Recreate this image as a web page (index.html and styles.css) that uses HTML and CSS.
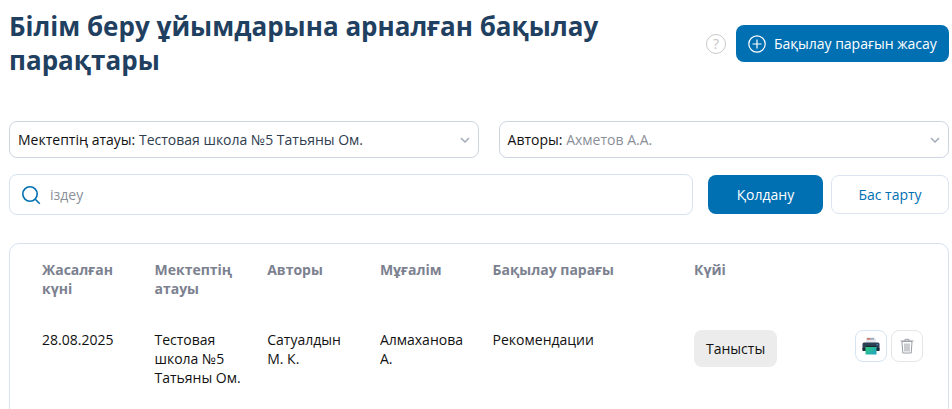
FILE: index.html
```html
<!DOCTYPE html>
<html lang="en">
<head>
  <meta charset="UTF-8">
  <meta name="viewport" content="width=device-width, initial-scale=1.0">
  <title>Бақылау парақтары</title>
  <link rel="stylesheet" href="styles.css">
</head>
<body>
  <div class="page-head">
    <h1>Білім беру ұйымдарына арналған бақылау парақтары</h1>
    <div class="head-actions">
      <span class="help-icon">?</span>
      <button class="btn btn-primary btn-create">
        <svg width="18" height="18" viewBox="0 0 18 18" fill="none" stroke="#fff" stroke-width="1.2">
          <circle cx="9" cy="9" r="8.2"/>
          <path d="M9 4.5v9M4.5 9h9"/>
        </svg>
        Бақылау парағын жасау
      </button>
    </div>
  </div>

  <div class="filters">
    <div class="select">
      <span class="select-label">Мектептің атауы:</span> <span class="select-value">Тестовая школа №5 Татьяны Ом.</span>
      <svg class="chevron" width="10" height="6" viewBox="0 0 10 6" fill="none" stroke="#a3abb8" stroke-width="1.5"><path d="M1 1l4 4 4-4"/></svg>
    </div>
    <div class="select">
      <span class="select-label">Авторы:</span> <span class="select-value muted">Ахметов А.А.</span>
      <svg class="chevron" width="10" height="6" viewBox="0 0 10 6" fill="none" stroke="#a3abb8" stroke-width="1.5"><path d="M1 1l4 4 4-4"/></svg>
    </div>
  </div>

  <div class="search-row">
    <div class="search">
      <svg width="20" height="20" viewBox="0 0 20 20" fill="none" stroke="#0170b3" stroke-width="1.6">
        <circle cx="9" cy="9" r="7.2"/>
        <path d="M14.2 14.2l4.6 4.6"/>
      </svg>
      <span>іздеу</span>
    </div>
    <button class="btn btn-primary btn-apply">Қолдану</button>
    <button class="btn btn-outline">Бас тарту</button>
  </div>

  <div class="card">
    <table>
      <thead>
        <tr>
          <th class="col-date">Жасалған күні</th>
          <th class="col-school">Мектептің атауы</th>
          <th class="col-author">Авторы</th>
          <th class="col-teacher">Мұғалім</th>
          <th class="col-sheet">Бақылау парағы</th>
          <th class="col-status">Күйі</th>
          <th></th>
        </tr>
      </thead>
      <tbody>
        <tr>
          <td>28.08.2025</td>
          <td>Тестовая школа №5 Татьяны Ом.</td>
          <td>Сатуалдын М. К.</td>
          <td>Алмаханова А.</td>
          <td>Рекомендации</td>
          <td><span class="badge">Танысты</span></td>
          <td>
            <div class="row-actions">
              <span class="icon-btn print">
                <svg width="18" height="18" viewBox="0 0 18 18">
                  <defs>
                    <linearGradient id="printSheet" x1="0" y1="0" x2="1" y2="1">
                      <stop offset="0" stop-color="#2fd07a"/>
                      <stop offset="1" stop-color="#1f9fc4"/>
                    </linearGradient>
                  </defs>
                  <path d="M4 .5h8.5l1.5 1.5v4H4z" fill="#e4e8ee"/>
                  <path d="M5 1.2h3.4v1.4H5z" fill="#c9574f"/>
                  <path d="M8.4 1.2h3.6v1.4H8.4z" fill="#8e99a8"/>
                  <rect x=".5" y="5.5" width="17" height="8" rx="1.5" fill="#2d3f52"/>
                  <rect x=".5" y="11" width="17" height="3" fill="#1e2c3a"/>
                  <rect x="3.5" y="9" width="11" height="8.5" fill="url(#printSheet)"/>
                  <rect x="3.5" y="9" width="11" height="1" fill="#16222e"/>
                  <circle cx="15.2" cy="7.5" r=".7" fill="#4aa3df"/>
                </svg>
              </span>
              <span class="icon-btn">
                <svg width="14" height="16" viewBox="0 0 14 16" fill="none">
                  <path d="M.5 3h13M5 3V1.3h4V3" stroke="#9a9fa6"/>
                  <path d="M2 3.5l.8 11.5h8.4L12 3.5z" fill="#fff" stroke="#9a9fa6"/>
                  <rect x="4" y="5.5" width="6" height="8" fill="#c9cbce"/>
                </svg>
              </span>
            </div>
          </td>
        </tr>
      </tbody>
    </table>
  </div>
</body>
</html>
```

FILE: styles.css
```css
* {
  box-sizing: border-box;
}

html {
  overflow: hidden;
}

body {
  margin: 0;
  padding: 9px 3px 0 9px;
  font-family: 'Open Sans', sans-serif;
  font-size: 14px;
  color: #111;
  background: #fff;
}

.page-head {
  display: flex;
  justify-content: space-between;
  align-items: flex-start;
  height: 112px;
}

h1 {
  margin: 0;
  width: 640px;
  font-size: 26px;
  line-height: 34px;
  font-weight: 700;
  color: #1f4060;
}

.head-actions {
  display: flex;
  align-items: center;
  gap: 10px;
  margin-top: 16px;
}

.help-icon {
  width: 20px;
  height: 20px;
  border: 1px solid #c9c9c9;
  border-radius: 50%;
  color: #c4c4c4;
  font-size: 14px;
  line-height: 18px;
  text-align: center;
}

.btn {
  font-family: inherit;
  font-size: 14px;
  border-radius: 8px;
  cursor: pointer;
}

.btn-primary {
  background: #0170b3;
  border: none;
  color: #fff;
}

.btn-create {
  display: flex;
  align-items: center;
  gap: 8px;
  width: 213px;
  height: 37px;
  padding: 0 0 0 12px;
}

.btn-outline {
  width: 118px;
  height: 39px;
  background: #fff;
  border: 1px solid #dbe5f1;
  color: #0170b3;
}

.filters {
  display: flex;
  gap: 20px;
}

.select {
  position: relative;
  height: 37px;
  padding: 0 8px;
  flex: 470;
  border: 1px solid #cdd5e1;
  border-radius: 8px;
  line-height: 35px;
}

.select + .select {
  flex: 450;
}

.select-label {
  color: #111;
}

.select-value {
  color: #2f3d4f;
}

.select-value.muted {
  color: #8a8f98;
}

.chevron {
  position: absolute;
  right: 8px;
  top: 15px;
}

.search-row {
  display: flex;
  align-items: center;
  margin-top: 16px;
}

.search {
  display: flex;
  align-items: center;
  gap: 9px;
  width: 684px;
  height: 41px;
  padding-left: 11px;
  border: 1px solid #d5e3f2;
  border-radius: 8px;
  color: #8a8f98;
}

.btn-apply {
  width: 115px;
  height: 39px;
  margin: 0 8px 0 15px;
}

.card {
  margin-top: 28px;
  height: 200px;
  padding: 16px 0 0 32px;
  border: 1px solid #d5e3f2;
  border-radius: 10px;
}

table {
  width: 100%;
  border-collapse: collapse;
  table-layout: fixed;
}

th {
  padding: 0 10px 0 0;
  height: 59px;
  vertical-align: top;
  text-align: left;
  font-size: 14px;
  line-height: 19px;
  font-weight: 700;
  color: #7c8190;
}

td {
  padding: 11px 20px 0 0;
  vertical-align: top;
  line-height: 19px;
}

.col-date {
  width: 112.5px;
}

.col-school,
.col-author,
.col-teacher {
  width: 112.7px;
}

.col-sheet {
  width: 201.5px;
}

.col-status {
  width: 160.5px;
}

.badge {
  display: block;
  width: 83px;
  height: 37px;
  background: #ececec;
  border-radius: 8px;
  line-height: 37px;
  text-align: center;
}

.row-actions {
  display: flex;
  gap: 4px;
}

.icon-btn {
  display: flex;
  align-items: center;
  justify-content: center;
  flex: none;
  width: 32px;
  height: 32px;
  border: 1px solid #e6e6e6;
  border-radius: 8px;
}

.icon-btn.print {
  border-color: #d5e3f2;
}
```
